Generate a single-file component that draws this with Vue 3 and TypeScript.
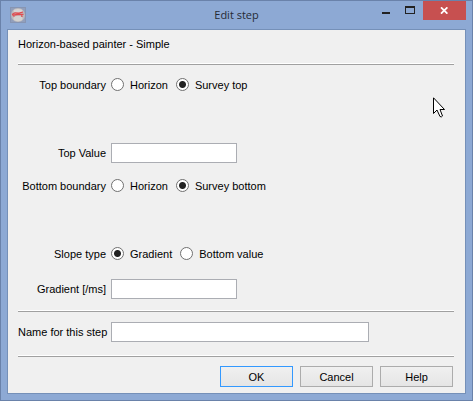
<script setup lang="ts">
import { ref } from 'vue'

const topBoundary = ref<'horizon' | 'survey'>('survey')
const bottomBoundary = ref<'horizon' | 'survey'>('survey')
const slopeType = ref<'gradient' | 'value'>('gradient')
const topValue = ref('')
const gradient = ref('')
const stepName = ref('')
</script>

<template>
  <div class="window">
    <header class="titlebar">
      <svg class="app-icon" width="16" height="16" viewBox="0 0 16 16" aria-hidden="true">
        <rect x="0.5" y="0.5" width="15" height="15" fill="#929fbb" stroke="#8795b3" />
        <circle cx="8" cy="8" r="7" fill="#bdb9bc" />
        <ellipse cx="8" cy="4" rx="4.500" ry="2" fill="#d8d4d4" />
        <ellipse cx="8" cy="11.500" rx="4.500" ry="2.800" fill="#d3d2d0" />
        <path d="M2 7.500 L5 5.800 L9 6.200 L13 5 M2.500 8.300 L7 7.500 L13.500 7.300 M5 7.500 L3.500 9.500 M11.500 7 L12 10" fill="none" stroke="#e2494d" stroke-width="1.300" />
      </svg>
      <h1 class="title">Edit step</h1>
      <div class="controls">
        <button class="ctl" type="button" aria-label="Minimize">
          <svg width="10" height="9" viewBox="0 0 10 9"><rect x="1" y="6" width="8" height="2" fill="#222" /></svg>
        </button>
        <button class="ctl" type="button" aria-label="Maximize">
          <svg width="11" height="9" viewBox="0 0 11 9"><path d="M0 0H10V8H0ZM1 2V7H9V2Z" fill="#222" fill-rule="evenodd" /></svg>
        </button>
        <button class="ctl close" type="button" aria-label="Close">
          <svg width="9" height="7" viewBox="0 0 9 7"><path d="M1 0.300 L7.400 6.700 M7.400 0.300 L1 6.700" stroke="#fff" stroke-width="1.700" /></svg>
        </button>
      </div>
    </header>

    <form class="panel" @submit.prevent>
      <p class="heading">Horizon-based painter - Simple</p>
      <hr class="rule" />

      <div class="fields">
        <div class="row" role="radiogroup" aria-labelledby="top-b">
          <span id="top-b" class="label">Top boundary</span>
          <div class="options">
            <label class="option"><input v-model="topBoundary" type="radio" name="top" value="horizon" />Horizon</label>
            <label class="option"><input v-model="topBoundary" type="radio" name="top" value="survey" />Survey top</label>
          </div>
        </div>
        <div class="row spaced">
          <label class="label" for="top-value">Top Value</label>
          <input id="top-value" v-model="topValue" class="text" type="text" />
        </div>
        <div class="row" role="radiogroup" aria-labelledby="bottom-b">
          <span id="bottom-b" class="label">Bottom boundary</span>
          <div class="options">
            <label class="option"><input v-model="bottomBoundary" type="radio" name="bottom" value="horizon" />Horizon</label>
            <label class="option"><input v-model="bottomBoundary" type="radio" name="bottom" value="survey" />Survey bottom</label>
          </div>
        </div>
        <div class="row spaced" role="radiogroup" aria-labelledby="slope">
          <span id="slope" class="label">Slope type</span>
          <div class="options">
            <label class="option"><input v-model="slopeType" type="radio" name="slope" value="gradient" />Gradient</label>
            <label class="option"><input v-model="slopeType" type="radio" name="slope" value="value" />Bottom value</label>
          </div>
        </div>
        <div class="row detail">
          <label class="label" for="gradient">Gradient [/ms]</label>
          <input id="gradient" v-model="gradient" class="text" type="text" />
        </div>
      </div>

      <hr class="rule" />
      <div class="row name-row">
        <label class="label" for="step-name">Name for this step</label>
        <input id="step-name" v-model="stepName" class="text wide" type="text" />
      </div>
      <hr class="rule" />

      <footer class="actions">
        <button class="btn primary" type="submit">OK</button>
        <button class="btn" type="button">Cancel</button>
        <button class="btn" type="button">Help</button>
      </footer>
    </form>

    <svg class="cursor" width="12" height="21" viewBox="0 0 12 21" aria-hidden="true">
      <path d="M0.500 0.800 V16.500 L4 13 L7 19.500 Q8.500 20.500 9.500 19 L7 12.500 H11.500 Z" fill="#fff" stroke="#000" />
    </svg>
  </div>
</template>

<style>
body {
  margin: 0;
}
</style>

<style scoped>
.window {
  position: relative;
  box-sizing: border-box;
  min-height: 100vh;
  display: flex;
  flex-direction: column;
  padding: 0 6px 6px;
  border: 1px solid #6a82aa;
  background: #8da9d4;
  color: #000;
  font: 11px/14px "Liberation Sans", Arial, sans-serif;
}

.titlebar {
  display: grid;
  grid-template-columns: 1fr auto 1fr;
  height: 28px;
}

.app-icon {
  margin: 6px 0 0 3px;
}

.title {
  margin: 0;
  font: 11px/28px "Open Sans", "Noto Sans", sans-serif;
  color: #262b35;
}

.controls {
  display: flex;
  justify-content: flex-end;
}

.ctl {
  display: flex;
  align-items: center;
  justify-content: center;
  width: 25px;
  height: 19px;
  padding: 0;
  border: 0;
  background: transparent;
}

.close {
  width: 43px;
  background: #c75050;
}

.panel {
  flex: 1;
  padding: 4px 11px 6px 10px;
  border: 1px solid #7590b8;
  background: #f0f0f0;
}

.heading {
  margin: 0 0 9px;
  line-height: 20px;
}

.rule {
  height: 1px;
  margin: 0;
  border: 0;
  border-top: 1px solid #fff;
  background: #a0a0a0;
}

.fields {
  display: grid;
  row-gap: 13px;
  padding: 10px 0 11px;
}

.row {
  display: grid;
  grid-template-columns: 88px 1fr;
  align-items: center;
  column-gap: 5px;
  min-height: 19px;
}

.spaced {
  margin-top: 36px;
}

.detail {
  margin-top: 3px;
}

.name-row {
  padding: 10px 0 13px;
}

.label {
  text-align: right;
  white-space: nowrap;
}

.options {
  display: flex;
  gap: 8px;
}

.option {
  display: flex;
  align-items: center;
  gap: 6px;
}

.option input {
  appearance: none;
  box-sizing: border-box;
  width: 13px;
  height: 13px;
  margin: 0;
  border: 1px solid #707070;
  border-radius: 50%;
  background: #fff;
}

.option input:checked {
  background: radial-gradient(circle, #222 3px, #fff 4px);
}

.text {
  box-sizing: border-box;
  width: 126px;
  height: 20px;
  padding: 0 3px;
  border: 1px solid #abadb3;
  background: #fff;
  font: inherit;
}

.wide {
  width: 258px;
}

.actions {
  display: flex;
  justify-content: flex-end;
  gap: 7px;
  padding: 9px 1px 0 0;
}

.btn {
  box-sizing: border-box;
  width: 73px;
  height: 21px;
  padding: 0;
  border: 1px solid #acacac;
  background: linear-gradient(#f0f0f0, #e5e5e5);
  color: #000;
  font: inherit;
}

.btn.primary {
  border: 1px solid #3399ff;
}

.cursor {
  position: absolute;
  top: 96px;
  right: 27px;
}
</style>
